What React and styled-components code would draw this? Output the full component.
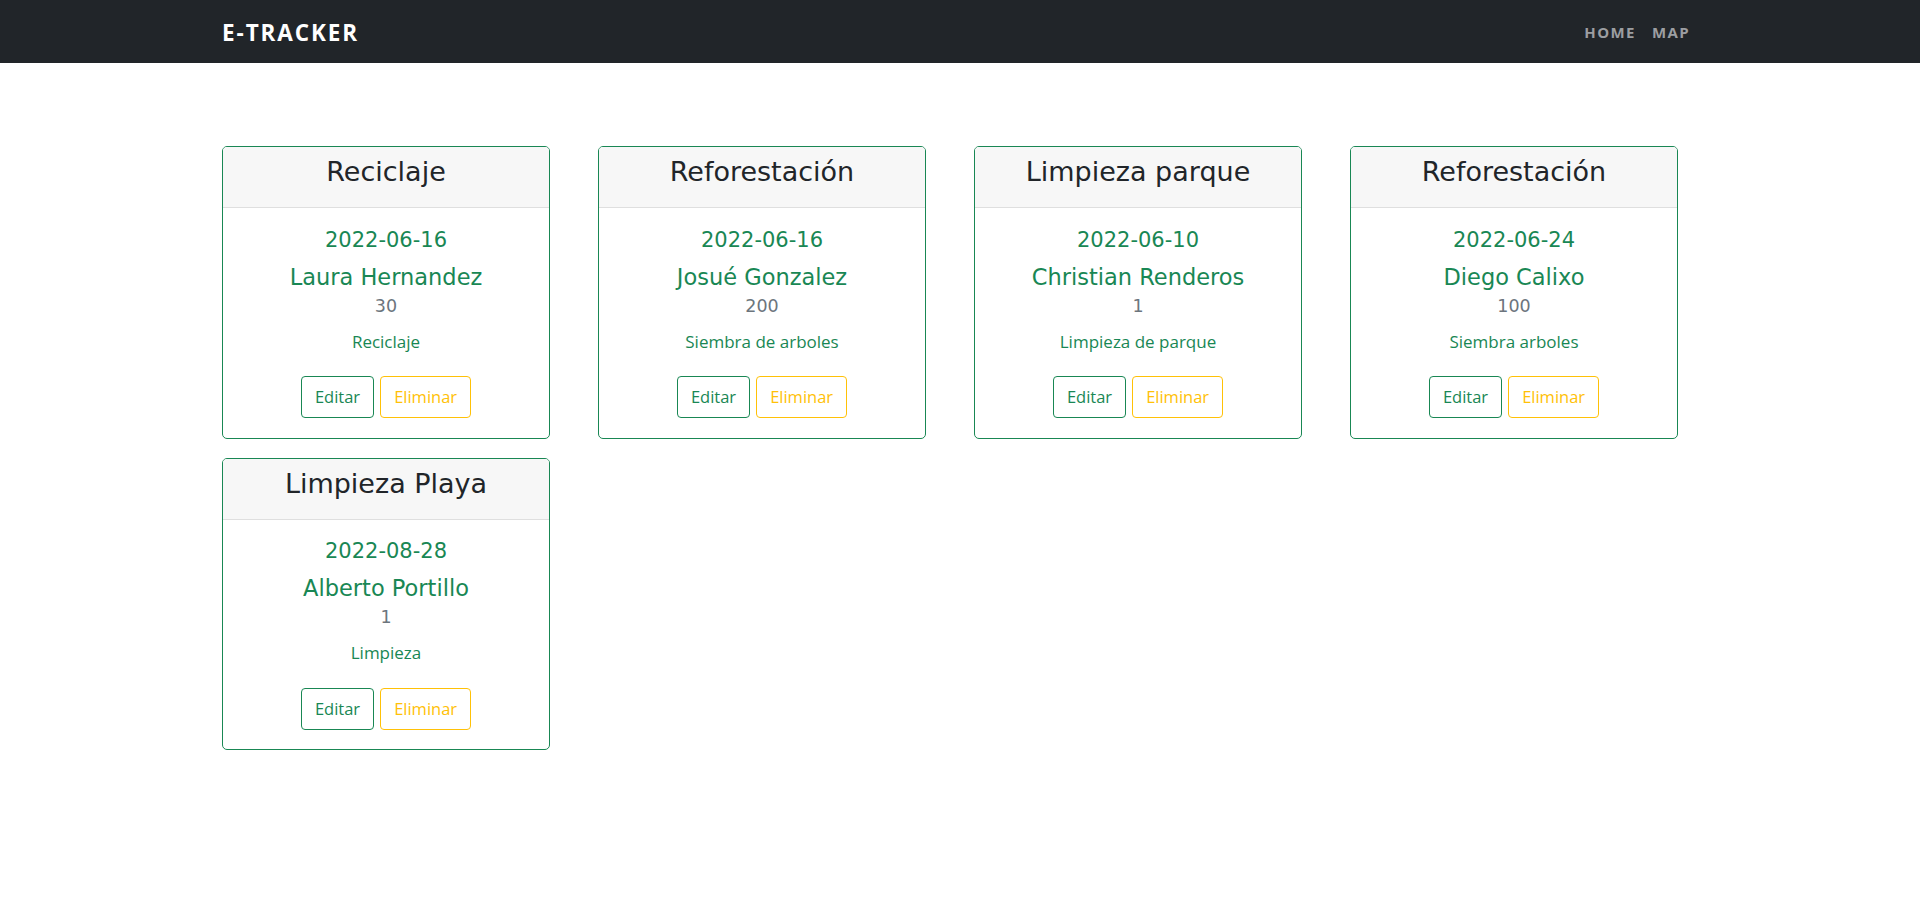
import React from 'react'
import styled, { createGlobalStyle } from 'styled-components'

const GlobalStyle = createGlobalStyle`
  body {
    margin: 0;
    background: #fff;
    font-family: "Open Sans", "Noto Sans", sans-serif;
    color: #212529;
  }
`

const events = [
  { title: 'Reciclaje', date: '2022-06-16', name: 'Laura Hernandez', amount: '30', desc: 'Reciclaje' },
  { title: 'Reforestación', date: '2022-06-16', name: 'Josué Gonzalez', amount: '200', desc: 'Siembra de arboles' },
  { title: 'Limpieza parque', date: '2022-06-10', name: 'Christian Renderos', amount: '1', desc: 'Limpieza de parque' },
  { title: 'Reforestación', date: '2022-06-24', name: 'Diego Calixo', amount: '100', desc: 'Siembra arboles' },
  { title: 'Limpieza Playa', date: '2022-08-28', name: 'Alberto Portillo', amount: '1', desc: 'Limpieza' },
]

const App = () => {
  return (
    <>
      <GlobalStyle />
      <Navbar>
        <NavInner>
          <Brand href="#">E-TRACKER</Brand>
          <NavLinks>
            <NavLink href="#">Home</NavLink>
            <NavLink href="#">Map</NavLink>
          </NavLinks>
        </NavInner>
      </Navbar>
      <Main>
        <CardGrid>
          {events.map((ev, i) => (
            <Card key={i}>
              <CardHeader>
                <Title>{ev.title}</Title>
              </CardHeader>
              <CardBody>
                <DateText>{ev.date}</DateText>
                <Name>{ev.name}</Name>
                <Amount>{ev.amount}</Amount>
                <Desc>{ev.desc}</Desc>
                <Actions>
                  <OutlineButton color="#198754">Editar</OutlineButton>
                  <OutlineButton color="#ffc107">Eliminar</OutlineButton>
                </Actions>
              </CardBody>
            </Card>
          ))}
        </CardGrid>
      </Main>
    </>
  )
}

export default App

const headingFont = `"DejaVu Sans", "Open Sans", sans-serif`

const Navbar = styled.nav`
  background: #212529;
  height: 63px;
`

const NavInner = styled.div`
  width: 1476px;
  height: 100%;
  margin: 0 auto;
  display: flex;
  align-items: center;
  justify-content: space-between;
`

const Brand = styled.a`
  color: #fff;
  font-size: 22.5px;
  font-weight: 700;
  letter-spacing: 1.9px;
  text-decoration: none;
  padding-top: 2px;
`

const NavLinks = styled.div`
  display: flex;
  align-items: center;
`

const NavLink = styled.a`
  color: #9c9ea1;
  font-size: 15px;
  font-weight: 700;
  letter-spacing: 1.4px;
  text-transform: uppercase;
  text-decoration: none;
  padding: 0 8px;
`

const Main = styled.main`
  width: 1476px;
  margin: 0 auto;
  padding-top: 83px;
`

const CardGrid = styled.div`
  display: flex;
  flex-wrap: wrap;
  gap: 19px 48px;
`

const Card = styled.div`
  width: 328px;
  box-sizing: border-box;
  border: 1px solid #198754;
  border-radius: 5px;
  overflow: hidden;
  text-align: center;
`

const CardHeader = styled.div`
  height: 61px;
  box-sizing: border-box;
  padding: 9px 16px 0;
  background: #f7f7f7;
  border-bottom: 1px solid #dfdfdf;
`

const Title = styled.h3`
  margin: 0;
  font-family: ${headingFont};
  font-size: 27px;
  font-weight: 400;
  line-height: 1.2;
  color: #212529;
`

const CardBody = styled.div`
  padding: 19.5px 16px 19.5px;
  display: flex;
  flex-direction: column;
  align-items: center;
`

const DateText = styled.h4`
  margin: 0 0 11px;
  font-family: ${headingFont};
  font-size: 21px;
  font-weight: 400;
  line-height: 1.2;
  color: #198754;
`

const Name = styled.h5`
  margin: 0 0 5px;
  font-family: ${headingFont};
  font-size: 22.5px;
  font-weight: 400;
  line-height: 1.2;
  color: #198754;
`

const Amount = styled.div`
  font-family: ${headingFont};
  font-size: 17.5px;
  line-height: 1.2;
  color: #6c757d;
  margin-bottom: 12px;
`

const Desc = styled.p`
  margin: 0 0 22px;
  font-size: 17px;
  line-height: 1.5;
  color: #198754;
`

const Actions = styled.div`
  display: flex;
  justify-content: center;
  gap: 6px;
`

const OutlineButton = styled.button`
  height: 42px;
  padding: 0 13px;
  background: transparent;
  border: 1px solid ${({ color }) => color};
  border-radius: 4px;
  color: ${({ color }) => color};
  font-family: "Open Sans", "Noto Sans", sans-serif;
  font-size: 16.5px;
  line-height: 1.5;
  cursor: pointer;
`
